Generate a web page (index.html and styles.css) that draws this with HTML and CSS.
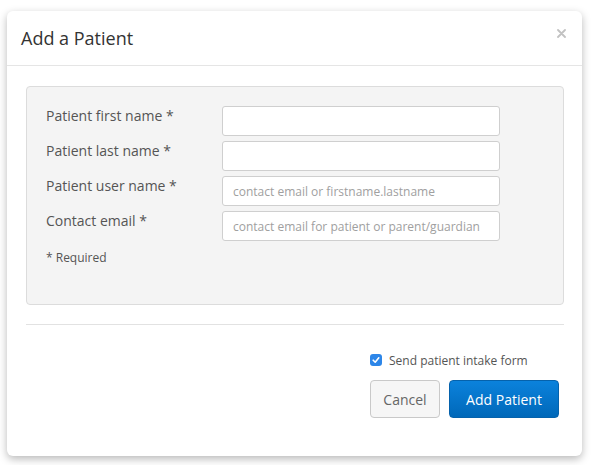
FILE: index.html
```html
<!DOCTYPE html>
<html>
<head>
<meta charset="utf-8">
<link rel="stylesheet" href="styles.css">
</head>
<body>
<div class="modal">
  <div class="modal-header">
    <h1 class="title">Add a Patient</h1>
    <span class="close" aria-label="Close">
      <svg width="9" height="9" viewBox="0 0 9 9"><path d="M1 1L8 8M8 1L1 8" stroke="#c2c2c2" stroke-width="1.8" stroke-linecap="round"/></svg>
    </span>
  </div>
  <div class="modal-body">
    <div class="well">
      <div class="form-grid">
        <label class="label">Patient first name *</label>
        <input class="input" type="text">
        <label class="label">Patient last name *</label>
        <input class="input" type="text">
        <label class="label">Patient user name *</label>
        <input class="input" type="text" placeholder="contact email or firstname.lastname">
        <label class="label">Contact email *</label>
        <input class="input" type="text" placeholder="contact email for patient or parent/guardian">
      </div>
      <div class="required">* Required</div>
    </div>
    <div class="divider"></div>
  </div>
  <div class="modal-footer">
    <div class="footer-group">
      <label class="check-row">
        <span class="checkbox">
          <svg width="8" height="8" viewBox="0 0 8 8"><path d="M1.2 4.2L3.2 6.2L6.8 1.8" fill="none" stroke="#fff" stroke-width="1.6" stroke-linecap="round" stroke-linejoin="round"/></svg>
        </span>
        <span class="check-text">Send patient intake form</span>
      </label>
      <div class="buttons">
        <button class="btn btn-default">Cancel</button>
        <button class="btn btn-primary">Add Patient</button>
      </div>
    </div>
  </div>
</div>
</body>
</html>
```

FILE: styles.css
```css
* { box-sizing: border-box; }
html, body { margin: 0; padding: 0; background: #fff; }
body {
  font-family: "Open Sans", "Liberation Sans", sans-serif;
  color: #555;
  width: 593px;
  height: 465px;
  overflow: hidden;
}
.modal {
  margin: 11px 0 0 7px;
  width: 575px;
  height: 445px;
  background: #fff;
  border-radius: 6px;
  box-shadow: 0 3px 9px rgba(0, 0, 0, 0.28);
  display: flex;
  flex-direction: column;
}
.modal-header {
  height: 55px;
  border-bottom: 1px solid #e5e5e5;
  display: flex;
  align-items: flex-start;
  justify-content: space-between;
  padding: 0 16px 0 14px;
}
.title {
  margin: 0;
  padding-top: 15px;
  font-size: 18px;
  font-weight: 400;
  line-height: 24px;
  color: #333;
}
.close {
  display: flex;
  margin-top: 18px;
}
.modal-body {
  padding: 20px 18px 0 19px;
}
.well {
  background: #f4f4f4;
  border: 1px solid #dcdcdc;
  border-radius: 4px;
  padding: 19px 19px 38px 19px;
}
.form-grid {
  display: grid;
  grid-template-columns: 176px 278px;
  row-gap: 5px;
}
.label {
  font-size: 14px;
  line-height: 20px;
  color: #555;
}
.input {
  height: 30px;
  border: 1px solid #cfcfcf;
  border-radius: 3px;
  background: #fff;
  padding: 0 10px;
  font-family: "Open Sans", "Liberation Sans", sans-serif;
  font-size: 12px;
  color: #555;
  outline: none;
}
.input::placeholder { color: #a0a0a0; }
.required {
  margin-top: 8px;
  font-size: 12px;
  line-height: 17px;
  color: #555;
}
.divider {
  margin-top: 19px;
  height: 1px;
  background: #e2e2e2;
}
.modal-footer {
  display: flex;
  justify-content: flex-end;
  padding: 24px 23px 0 0;
}
.footer-group {
  display: flex;
  flex-direction: column;
  gap: 9px;
}
.check-row {
  display: flex;
  align-items: center;
  height: 22px;
  gap: 7px;
}
.checkbox {
  width: 12px;
  height: 12px;
  border-radius: 3px;
  background: #2d86e8;
  display: flex;
  align-items: center;
  justify-content: center;
}
.check-text {
  font-size: 12px;
  color: #555;
}
.buttons {
  display: flex;
  gap: 9px;
}
.btn {
  height: 38px;
  font-family: "Open Sans", "Liberation Sans", sans-serif;
  font-size: 14px;
  border-radius: 4px;
  cursor: pointer;
}
.btn-default {
  width: 70px;
  background: #f6f6f6;
  border: 1px solid #c9c9c9;
  color: #666;
}
.btn-primary {
  width: 110px;
  background: linear-gradient(to bottom, #0b82dc, #0068b9);
  border: 1px solid #0562ac;
  color: #fff;
}
```
